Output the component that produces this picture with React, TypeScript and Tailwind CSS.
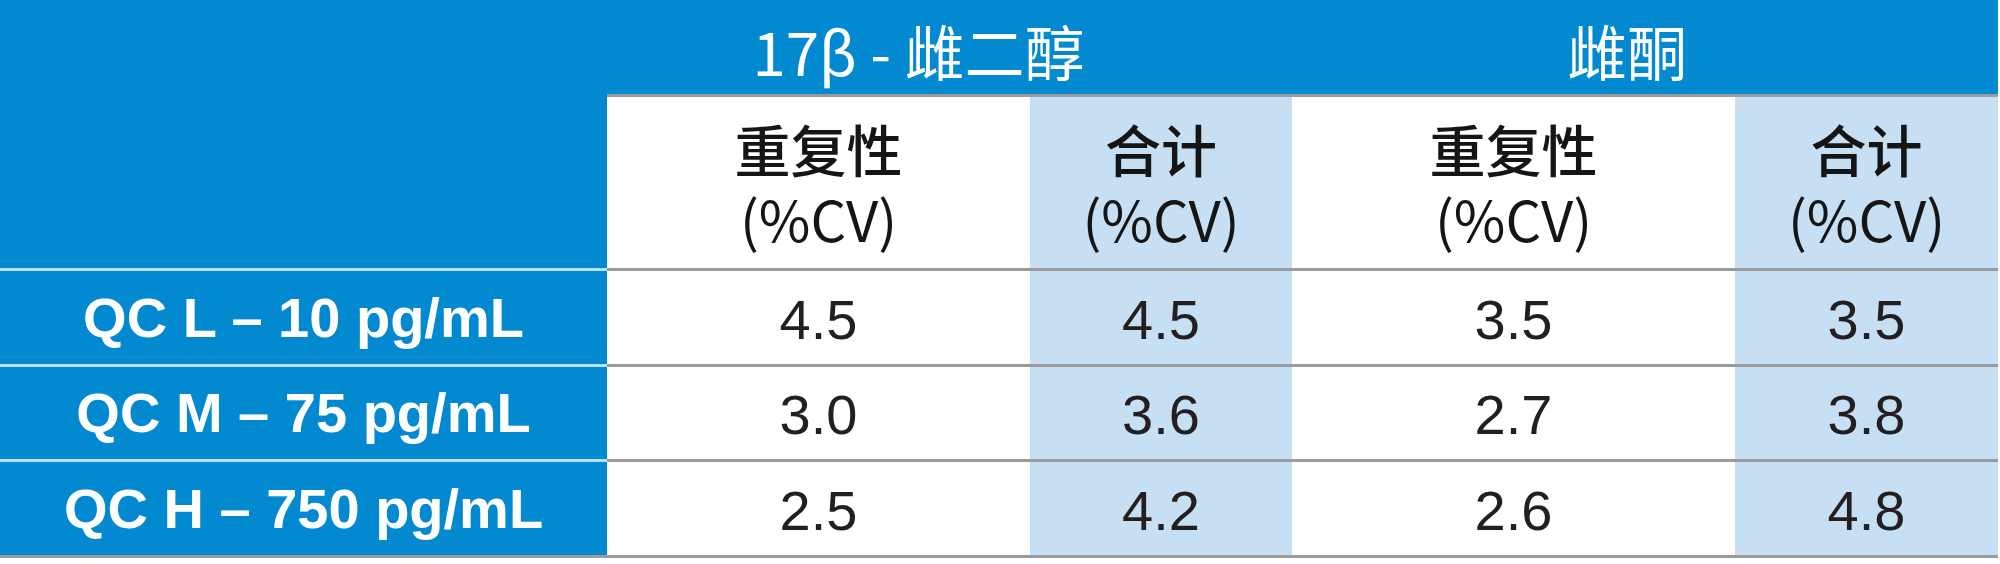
const rows = [
  { label: 'QC L – 10 pg/mL', values: ['4.5', '4.5', '3.5', '3.5'], h: 'h-[96px]' },
  { label: 'QC M – 75 pg/mL', values: ['3.0', '3.6', '2.7', '3.8'], h: 'h-[95px]' },
  { label: 'QC H – 750 pg/mL', values: ['2.5', '4.2', '2.6', '4.8'], h: 'h-[96px]' },
];

const widths = ['w-[423px]', 'w-[262px]', 'w-[443px]', 'w-[263px]'];
const fills = ['bg-white', 'bg-[#c6dff2]', 'bg-white', 'bg-[#c6dff2]'];

const cjk = { fontFamily: '"Noto Sans CJK SC", "Noto Sans", sans-serif' };
const arial = { fontFamily: '"Liberation Sans", Arial, sans-serif' };

const HeadCell = ({ i, title }: { i: number; title: string }) => (
  <div
    className={`${widths[i]} ${fills[i]} border-t-[3px] border-[#9a9b9d] flex flex-col items-center justify-center text-[56px] text-[#151515]`}
    style={cjk}
  >
    <div className="h-[70px] leading-[70px] font-medium">{title}</div>
    <div className="h-[70px] leading-[70px]">(%CV)</div>
  </div>
);

export default function App() {
  return (
    <div className="w-[2000px] h-[564px] bg-white">
      <div className="w-[1998px]">
        {/* top header */}
        <div className="flex h-[94px] bg-[#0389d0] text-white text-[60px] leading-none" style={cjk}>
          <div className="w-[607px]" />
          <div className="w-[685px] flex items-center justify-center pr-[62px] pt-[6px]">17β - 雌二醇</div>
          <div className="w-[706px] flex items-center justify-center pr-[36px] pt-[6px]">雌酮</div>
        </div>

        {/* sub header */}
        <div className="flex h-[174px]">
          <div className="w-[607px] bg-[#0389d0]" />
          <HeadCell i={0} title="重复性" />
          <HeadCell i={1} title="合计" />
          <HeadCell i={2} title="重复性" />
          <HeadCell i={3} title="合计" />
        </div>

        {/* data */}
        {rows.map(row => (
          <div className={`flex ${row.h}`} key={row.label}>
            <div
              className="w-[607px] bg-[#0389d0] border-t-[3px] border-[#b6e1f6] flex items-center justify-center text-white font-bold text-[56px] leading-none"
              style={arial}
            >
              {row.label}
            </div>
            {row.values.map((v, i) => (
              <div
                key={i}
                className={`${widths[i]} ${fills[i]} border-t-[3px] border-[#9a9b9d] flex items-center justify-center pt-[4px] text-[56px] leading-none text-[#231f20]`}
                style={arial}
              >
                {v}
              </div>
            ))}
          </div>
        ))}
        <div className="h-[3px] bg-[#9a9b9d]" />
      </div>
    </div>
  );
}
